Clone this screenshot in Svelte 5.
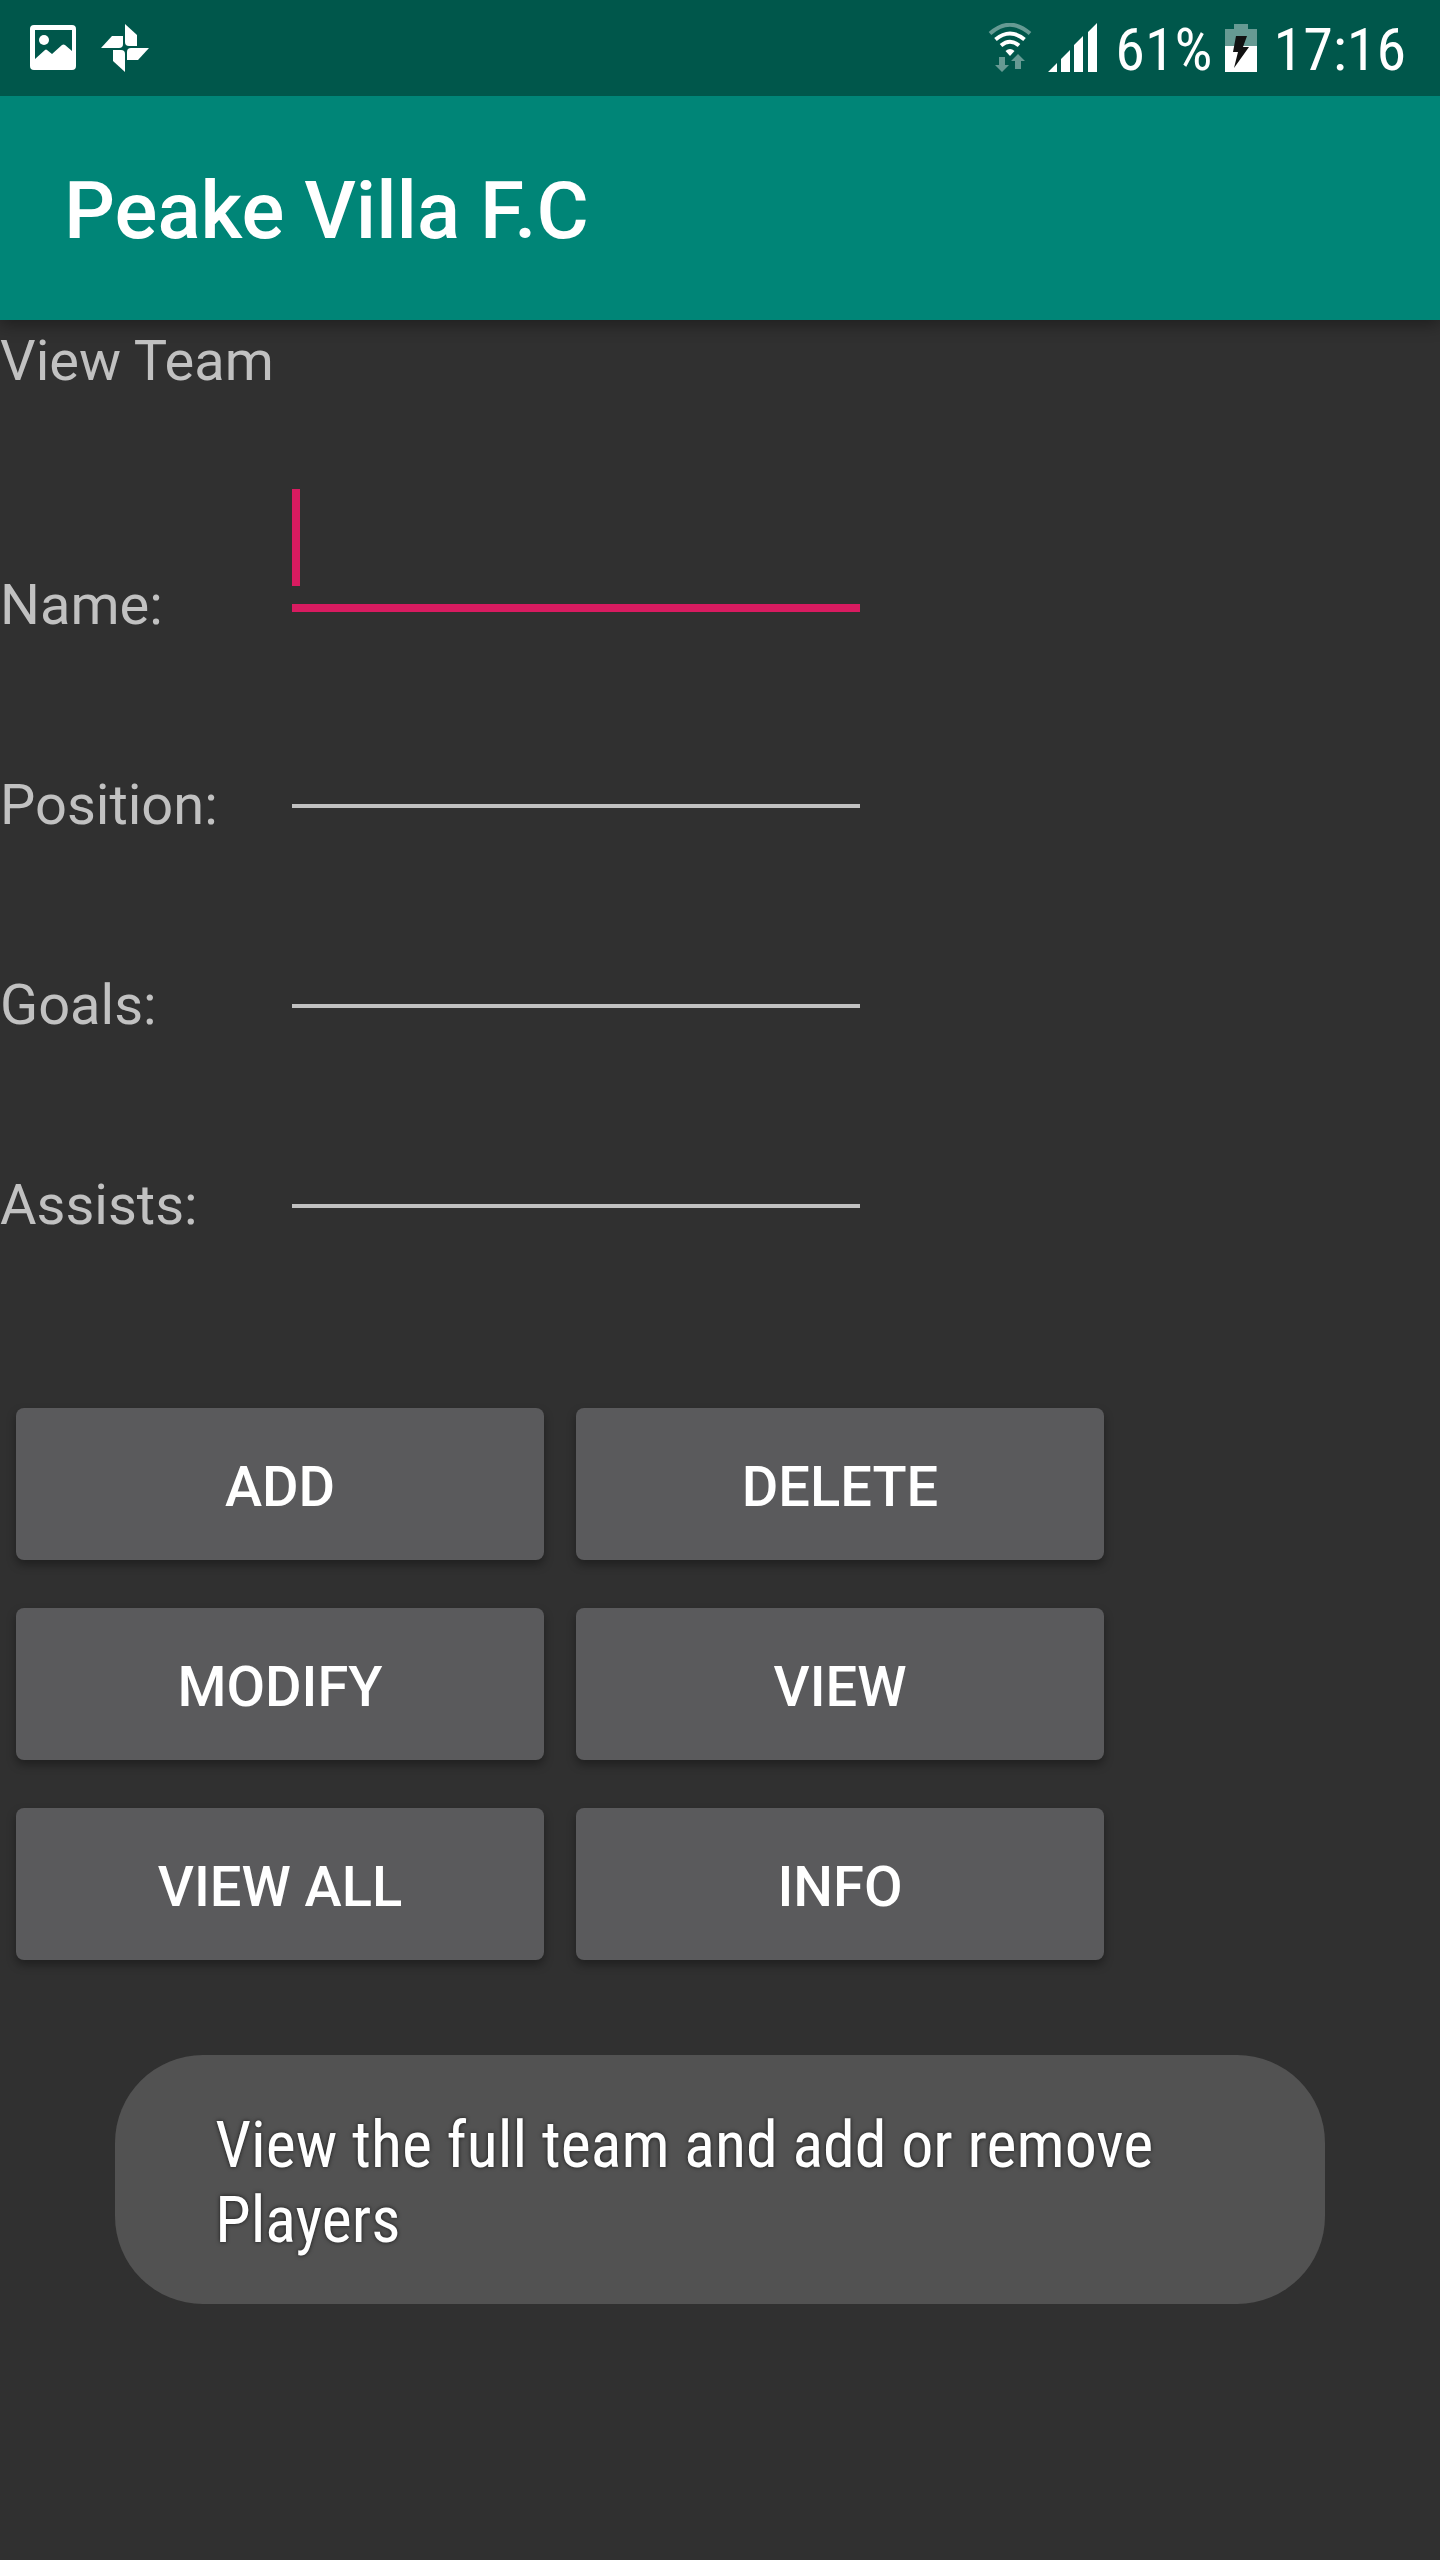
<script>
  const fields = [
    { id: 'name', label: 'Name:', active: true },
    { id: 'position', label: 'Position:' },
    { id: 'goals', label: 'Goals:' },
    { id: 'assists', label: 'Assists:' }
  ];
  const actions = ['Add', 'Delete', 'Modify', 'View', 'View All', 'Info'];
  let values = $state({ name: '', position: '', goals: '', assists: '' });
</script>

<div class="screen">
  <div class="status">
    <div class="group notifications">
      <svg width="48" height="48" viewBox="0 0 48 48" aria-hidden="true">
        <path fill="#fff" fill-rule="evenodd" d="M5 1h38q4 0 4 4v37q0 4-4 4H5q-4 0-4-4V5q0-4 4-4zM6 6v29l10-9q1-1 2 0l5 4 10-9q1.500-1 3 0l7 6V6z" />
        <circle cx="15" cy="16" r="5" fill="#fff" />
      </svg>
      <svg width="48" height="48" viewBox="0 0 48 48" aria-hidden="true">
        <g fill="#fff">
          <path d="M24 0l12 11v11H28q-4 0-4-4z" />
          <path d="M48 24l-11 12H26v-8q0-4 4-4z" />
          <path d="M24 48l-12-11V26h8q4 0 4 4z" />
          <path d="M0 24l11-12h11v8q0 4-4 4z" />
        </g>
      </svg>
    </div>
    <div class="group system">
      <div class="group radios">
        <svg width="44" height="50" viewBox="0 0 44 50" aria-hidden="true">
          <g fill="none" stroke="#fff" stroke-width="4">
            <path stroke="#669a93" d="M2 10.500Q22-7 42 10.500" />
            <path d="M7.500 16.500q14.500-12 29 0" />
            <path d="M13 22.500q9-7.500 18 0" />
          </g>
          <path fill="#fff" d="M17.500 28q4.500-4 9 0L22 33z" />
          <path fill="#669a93" d="M11 34h6v8h4l-7 7-7-7h4zM27 46h6v-8h4l-7-7-7 7h4z" />
        </svg>
        <svg width="50" height="50" viewBox="0 0 50 50" aria-hidden="true">
          <path fill="#fff" d="M0 49l9-9v9zM13 36l9-9v22h-9zM26 22l9-9v36h-9zM40 9l9-9v49h-9z" />
        </svg>
      </div>
      <div class="group power">
        <span>61%</span>
        <svg width="32" height="50" viewBox="0 0 32 50" aria-hidden="true">
          <path fill="#669a93" d="M0 6h9V1h14v5h9v17H0z" />
          <path fill="#fff" d="M0 23h32v26H0z" />
          <path fill="#111" d="M11 13h11l-4 11h6L9 45l4-16H8z" />
        </svg>
      </div>
      <span class="clock">17:16</span>
    </div>
  </div>

  <header>
    <h1>Peake Villa F.C</h1>
  </header>

  <main>
    <h2>View Team</h2>

    <form onsubmit={(e) => e.preventDefault()}>
      {#each fields as field}
        <div class="row" class:active={field.active}>
          <label for={field.id}>{field.label}</label>
          <div class="entry">
            <input id={field.id} type="text" autocomplete="off" bind:value={values[field.id]} />
            {#if field.active}<i class="cursor"></i>{/if}
          </div>
        </div>
      {/each}

      <div class="actions">
        {#each actions as action}
          <button type="button">{action}</button>
        {/each}
      </div>
    </form>

    <div class="toast" role="status">View the full team and add or remove Players</div>
  </main>
</div>

<style>
  :global(body) {
    background: #303030;
  }
  .screen {
    min-height: 100vh;
    background: #303030;
    color: #c1c1c1;
    font-family: Roboto, sans-serif;
    font-size: 56px;
    line-height: 70px;
  }
  .status {
    position: relative;
    z-index: 1;
    display: flex;
    justify-content: space-between;
    align-items: center;
    height: 96px;
    padding: 0 34px 0 29px;
    background: #00574b;
    color: #fff;
    font-family: 'Roboto Condensed', Roboto, sans-serif;
    font-size: 60px;
  }
  .status span {
    padding-top: 4px;
  }
  .group {
    display: flex;
    align-items: center;
  }
  .notifications {
    gap: 24px;
  }
  .system {
    gap: 17px;
  }
  .radios {
    gap: 16px;
  }
  .power {
    gap: 12px;
  }
  svg {
    display: block;
    flex: none;
  }
  header {
    position: relative;
    display: flex;
    align-items: center;
    box-sizing: border-box;
    height: 224px;
    padding: 6px 64px 0;
    background: #008577;
    box-shadow: 0 4px 16px rgba(0, 0, 0, 0.4);
  }
  h1 {
    margin: 0;
    color: #fff;
    font-size: 80px;
    font-weight: 500;
    line-height: 94px;
  }
  main {
    padding-top: 6px;
  }
  h2 {
    margin: 0 0 44px;
    font-size: 56px;
    font-weight: 400;
  }
  .row {
    display: grid;
    grid-template-columns: 292px minmax(0, 568px);
    align-items: end;
    height: 200px;
  }
  .entry {
    position: relative;
    padding-bottom: 32px;
  }
  input {
    display: block;
    box-sizing: border-box;
    width: 100%;
    height: 120px;
    padding: 0 0 16px;
    border: 0;
    border-bottom: 4px solid #c1c1c1;
    border-radius: 0;
    outline: 0;
    background: transparent;
    color: #fff;
    font: inherit;
  }
  .active .entry {
    padding-bottom: 28px;
  }
  .active input {
    border-bottom: 8px solid #d81b60;
  }
  .cursor {
    position: absolute;
    left: 0;
    bottom: 54px;
    width: 8px;
    height: 97px;
    background: #d81b60;
  }
  .actions {
    display: grid;
    grid-template-columns: 1fr 1fr;
    gap: 48px 32px;
    max-width: 1088px;
    margin: 168px 16px 0;
  }
  button {
    height: 152px;
    padding: 6px 16px 0;
    border: 0;
    border-radius: 8px;
    background: #5a5a5c;
    box-shadow: 0 5px 10px rgba(0, 0, 0, 0.35);
    color: #fff;
    font: inherit;
    font-weight: 500;
    text-transform: uppercase;
  }
  .toast {
    margin: 95px 8% 0;
    padding: 53px 100px 46px;
    border-radius: 88px;
    background: #525252;
    color: #fff;
    font-family: 'Roboto Condensed', Roboto, sans-serif;
    font-size: 64px;
    line-height: 75px;
    text-shadow: 0 0 4px rgba(0, 0, 0, 0.7);
  }
</style>
